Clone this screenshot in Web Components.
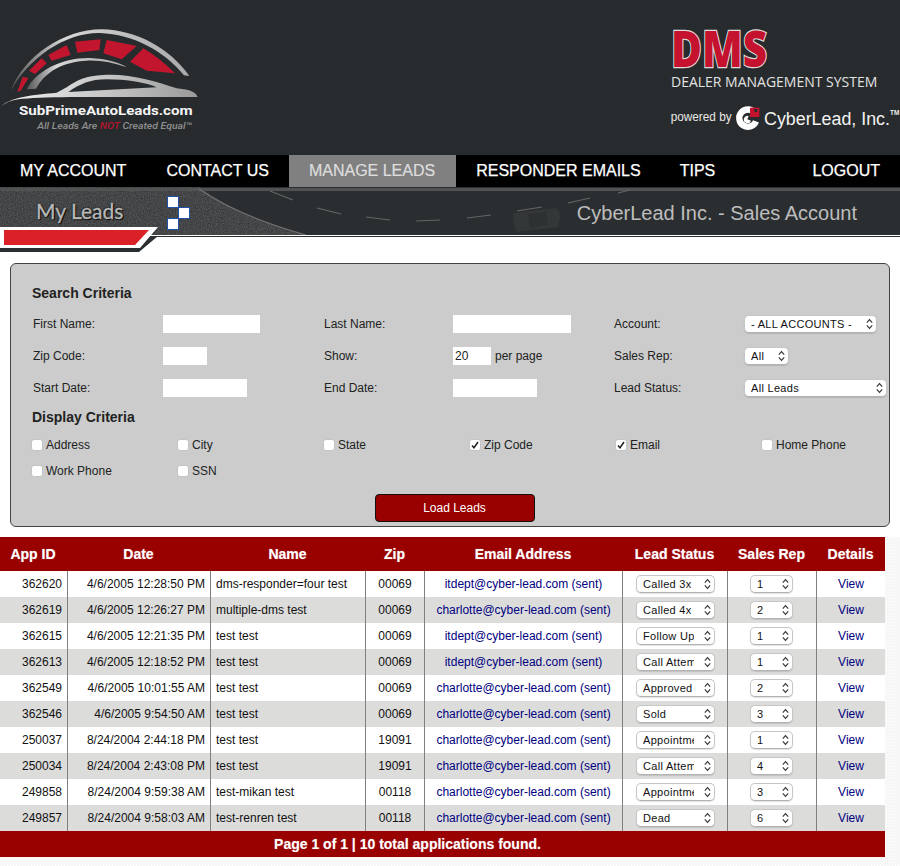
<!DOCTYPE html>
<html lang="en">
<head>
<meta charset="utf-8">
<title>DMS - My Leads</title>
<style>
html,body{margin:0;padding:0;background:#fff;font-family:"Liberation Sans",Arial,sans-serif;font-size:12px;color:#222;}
#page{width:900px;}
</style>
</head>
<body>
<div id="page">
  <site-header></site-header>
  <site-nav></site-nav>
  <site-banner></site-banner>
  <search-panel></search-panel>
  <lead-table></lead-table>
</div>
<script>
function make(name, html, init){
  customElements.define(name, class extends HTMLElement{
    connectedCallback(){
      if(this.shadowRoot) return;
      const r=this.attachShadow({mode:"open"});
      r.innerHTML = typeof html==="function" ? html(this) : html;
      if(init) init(r,this);
    }
  });
}

make("site-header",`
<style>
:host{display:flex;justify-content:space-between;height:155px;background:#282b2d;overflow:hidden}
svg{display:block;flex:none}
text{font-family:"Liberation Sans",Arial,sans-serif}
</style>
<svg width="300" height="155" viewBox="0 0 900 465" aria-label="SubPrimeAutoLeads.com">
  <defs>
    <linearGradient id="si" x1="0" x2="1" y1="0" y2="0"><stop offset="0" stop-color="#f4f4f4"/><stop offset=".55" stop-color="#c4c4c4"/><stop offset="1" stop-color="#9a9a9a"/></linearGradient>
    <linearGradient id="ar" x1="0" x2="1" y1="0" y2="0"><stop offset="0" stop-color="#555"/><stop offset=".3" stop-color="#d8d8d8"/><stop offset=".7" stop-color="#bbb"/><stop offset="1" stop-color="#aaa"/></linearGradient>
  </defs>
  <path fill="url(#ar)" d="M33,272 C70,170 190,88 305,88 C410,90 510,145 568,228 L552,226 C495,155 400,102 300,99 C195,97 85,175 33,272Z"/>
  <g fill="#c2162f">
    <path d="M52,275 L68,230 L85,235 L62,272Z"/>
    <path d="M87,212 L125,175 L140,190 L105,222Z"/>
    <path d="M145,165 L200,135 L212,165 L155,182Z"/>
    <path d="M225,125 L302,118 L298,150 L232,158Z"/>
    <path d="M320,120 L410,138 L365,178 L310,160Z"/>
    <path d="M430,145 Q480,175 525,220 L440,212 L390,185Z"/>
  </g>
  <path fill="url(#ar)" d="M80,268 C110,210 190,172 270,174 C320,176 360,188 380,202 C340,188 300,180 260,182 C190,185 135,215 108,266Z"/>
  <path fill="url(#si)" fill-rule="evenodd" d="M0,322 C30,290 100,285 170,278 L200,262 C230,240 260,226 320,224 C400,222 470,245 530,265 C560,268 585,272 593,291 L210,291 C140,292 85,294 55,298 C35,301 15,308 0,322Z M205,276 L470,262 C440,248 380,238 320,238 C270,238 240,252 205,276Z"/>
  <text x="57" y="346" font-size="40" font-weight="700" fill="#f4f4f4" textLength="521" lengthAdjust="spacingAndGlyphs" style="font-family:Roboto,'Liberation Sans',sans-serif">SubPrimeAutoLeads.com</text>
  <text x="112" y="387" font-size="27" font-style="italic" font-weight="500" fill="#909090" textLength="464" lengthAdjust="spacingAndGlyphs" style="font-family:Roboto,'Liberation Sans',sans-serif">All Leads Are <tspan fill="#b3142c">NOT</tspan> Created Equal™</text>
</svg>
<svg width="260" height="155" viewBox="0 0 780 465" aria-label="DMS Dealer Management System">
  <g transform="translate(0,30)">
    <text x="93" y="170" font-size="150" font-weight="800" fill="#c5122f" stroke="#dcdcdc" stroke-width="7" paint-order="stroke" textLength="288" lengthAdjust="spacingAndGlyphs" style="font-family:'Open Sans','Liberation Sans',sans-serif">DMS</text>
    <text x="93" y="230" font-size="42" fill="#e2e2e2" textLength="619" lengthAdjust="spacingAndGlyphs" style="font-family:'Open Sans','Liberation Sans',sans-serif">DEALER MANAGEMENT SYSTEM</text>
    <text x="92" y="333" font-size="36" fill="#e8e8e8" textLength="183" lengthAdjust="spacingAndGlyphs">powered by</text>
    <path d="M344,308 A26,26 0 1 0 348,334" fill="none" stroke="#fff" stroke-width="19"/>
    <path d="M326,318 A11,11 0 1 0 333,332 L322,328Z" fill="#fff"/>
    <rect x="330" y="293" width="28" height="28" fill="#c5122f"/>
    <rect x="343" y="297" width="9" height="9" fill="#282b2d"/>
    <text x="372" y="344" font-size="54" fill="#f2f2f2" textLength="378" lengthAdjust="spacingAndGlyphs">CyberLead, Inc.</text>
    <text x="750" y="315" font-size="22" font-weight="700" fill="#eee" textLength="28" lengthAdjust="spacingAndGlyphs">TM</text>
  </g>
</svg>
`);

make("site-nav",`
<style>
:host{display:flex;height:32px;background:#000;font:16px/32px "Liberation Sans",Arial,sans-serif;color:#fff}
a{display:block;padding:0 20px;color:inherit;text-decoration:none;-webkit-text-stroke:.25px #fff;white-space:nowrap}
a.on{background:#808080;color:#dedede;-webkit-text-stroke:.2px #dedede;padding-right:21px}
a.re{padding-right:19px}
a.end{margin-left:auto}
</style>
<a>MY ACCOUNT</a><a>CONTACT US</a><a class="on">MANAGE LEADS</a><a class="re">RESPONDER EMAILS</a><a>TIPS</a><a class="end">LOGOUT</a>
`);

make("site-banner",`
<style>
:host{display:block;position:relative;height:65px;background:#fff;overflow:hidden}
svg{position:absolute;left:0;top:0}
.row{position:relative;display:flex;justify-content:space-between;align-items:center;height:48px}
.l{margin-left:36px;font:21px/48px Lato,"Liberation Sans",sans-serif;color:#b8b8b8;-webkit-text-stroke:.4px #b8b8b8;text-shadow:0 0 2px #000,0 0 1px #000,1px 1px 1px #000;white-space:nowrap}
.r{margin:3px 43px 0 0;font:20px/44px "Liberation Sans",Arial,sans-serif;color:#bdbdbd;white-space:nowrap}
</style>
<svg width="900" height="65" viewBox="0 0 900 65" aria-hidden="true">
  <defs>
    <filter id="n" x="0" y="0" width="100%" height="100%"><feTurbulence type="fractalNoise" baseFrequency=".85" numOctaves="2" seed="4"/><feColorMatrix values="0 0 0 0 1  0 0 0 0 1  0 0 0 0 1  .3 0 0 0 -.08"/></filter>
    <clipPath id="cl"><path d="M0,0 L200,0 C225,20 260,35 306,48 L0,48Z"/></clipPath>
  </defs>
  <rect width="900" height="50" fill="#2b2e30"/>
  <g clip-path="url(#cl)"><rect width="320" height="48" fill="#363839"/><rect width="320" height="48" filter="url(#n)"/></g>
  <rect width="900" height="3" y="1" fill="#505253"/>
  <path d="M199,2 C225,20 260,35 306,48" fill="none" stroke="#6f7172" stroke-width="1.2"/>
  <path d="M270,4 L293,13 M317,21 L341,27 M366,30 L390,33 M416,34 L440,33 M467,31 L491,28 M517,24 L542,20 M568,16 L590,11 M618,6 L630,3" fill="none" stroke="#636566" stroke-width="1.2"/>
  <path d="M513,26 L556,21 Q560,24 560,31 L558,40 L517,45 Q513,38 513,26Z" fill="#343738"/>
  <path d="M528,27 L546,25 L548,38 L530,41Z" fill="#2e3132"/>
  <g fill="#fff" stroke="#1f52a8" stroke-width="1">
    <rect x="167.5" y="9.5" width="11" height="11"/><rect x="178.5" y="20.5" width="11" height="11"/><rect x="167.5" y="31.5" width="11" height="11"/>
  </g>
  <rect x="150" y="48" width="750" height="1" fill="#fff"/>
  <path d="M0,49 L158,49 L139,65 L0,65Z" fill="#2b2e30"/>
  <path d="M0,40 L158,40 L140,61 L0,61Z" fill="#fff"/>
  <path d="M4,43 L149,43 L135,58 L4,58Z" fill="#da2128"/>
</svg>
<div class="row"><span class="l">My Leads</span><span class="r">CyberLead Inc. - Sales Account</span></div>
`);

make("mac-select", h=>{
  const w=h.getAttribute("w")||"79";
  return `
<style>
:host{display:inline-flex;vertical-align:middle;text-align:left}
.b{box-sizing:border-box;width:${w}px;height:18px;display:flex;align-items:center;background:#fff;border:1px solid #c6c6c6;border-bottom-color:#b2b2b2;border-radius:5px;padding:0 3px 0 6.5px;box-shadow:0 1px 1px rgba(0,0,0,.12);font:11px/16px "Liberation Sans",Arial,sans-serif;letter-spacing:.3px;color:#111}
.t{flex:1;min-width:0;overflow:hidden;white-space:pre}
svg{flex:none;margin-left:10px;display:block}
</style>
<div class="b" role="combobox"><span class="t"><slot></slot></span>
<svg width="7" height="12" viewBox="0 0 7 12"><path d="M.8,4.6 L3.5,1.6 L6.2,4.6 M.8,7.4 L3.5,10.4 L6.2,7.4" fill="none" stroke="#333" stroke-width="1.1"/></svg></div>`;
});

make("check-field", h=>{
  const on=h.hasAttribute("checked");
  return `
<style>
:host{display:flex;align-items:center;height:26px;font:12px "Liberation Sans",Arial,sans-serif;color:#222}
.c{box-sizing:border-box;width:12px;height:12px;margin-right:3px;background:#fff;border:1px solid #c4c4c4;border-radius:3px;display:flex;align-items:center;justify-content:center;flex:none}
svg{display:block}
</style>
<span class="c" role="checkbox" aria-checked="${on}">${on?'<svg width="8" height="8" viewBox="0 0 8 8"><path d="M1,4.4 L3,6.8 L7,1" fill="none" stroke="#222" stroke-width="1.5"/></svg>':''}</span><slot></slot>`;
});

make("search-panel",`
<style>
:host{display:block;box-sizing:border-box;width:880px;height:264px;margin:11px 0 10px 10px;padding:21px 2px 0 22px;background:#cbcccb;border:1px solid #444;border-radius:6px;font:12px "Liberation Sans",Arial,sans-serif;color:#222}
h2{margin:0 0 0 -1px;font:bold 14px/16px "Liberation Sans",Arial,sans-serif;color:#222}
.g{display:grid;grid-template-columns:130px 161px 129px 161px 130px 143px;grid-auto-rows:32px;align-items:center;margin:7px 0 5px}
.g mac-select{margin-left:-.5px}
input{display:block;box-sizing:border-box;height:18px;border:0;padding:0 2px;margin:0;background:#fff;font:12px "Liberation Sans",Arial,sans-serif;color:#222;outline:0}
.inl{display:flex;align-items:center;gap:4px}
.c{display:grid;grid-template-columns:repeat(6,146px);margin:7px 0 10px -2px}
button{display:block;box-sizing:border-box;width:160px;height:28px;margin:0 0 0 342px;padding:0 1px 0 0;background:#990000;border:1px solid #111;border-radius:4px;color:#fff;font:12px "Liberation Sans",Arial,sans-serif}
</style>
<h2>Search Criteria</h2>
<div class="g">
  <span>First Name:</span><input style="width:97px">
  <span>Last Name:</span><input style="width:118px">
  <span>Account:</span><mac-select w="133">- ALL ACCOUNTS -</mac-select>
  <span>Zip Code:</span><input style="width:44px">
  <span>Show:</span><span class="inl"><input style="width:38px" value="20">per page</span>
  <span>Sales Rep:</span><mac-select w="45">All</mac-select>
  <span>Start Date:</span><input style="width:84px">
  <span>End Date:</span><input style="width:84px">
  <span>Lead Status:</span><mac-select w="143">All Leads</mac-select>
</div>
<h2>Display Criteria</h2>
<div class="c">
  <check-field>Address</check-field><check-field>City</check-field><check-field>State</check-field><check-field checked>Zip Code</check-field><check-field checked>Email</check-field><check-field>Home Phone</check-field>
  <check-field>Work Phone</check-field><check-field>SSN</check-field>
</div>
<button>Load Leads</button>
`);

const R=[
["362620","4/6/2005 12:28:50 PM","dms-responder=four test","00069","itdept@cyber-lead.com","Called 3x","1"],
["362619","4/6/2005 12:26:27 PM","multiple-dms test","00069","charlotte@cyber-lead.com","Called 4x","2"],
["362615","4/6/2005 12:21:35 PM","test test","00069","itdept@cyber-lead.com","Follow Up","1"],
["362613","4/6/2005 12:18:52 PM","test test","00069","itdept@cyber-lead.com","Call Attempted","1"],
["362549","4/6/2005 10:01:55 AM","test test","00069","charlotte@cyber-lead.com","Approved","2"],
["362546","4/6/2005 9:54:50 AM","test test","00069","charlotte@cyber-lead.com","Sold","3"],
["250037","8/24/2004 2:44:18 PM","test test","19091","charlotte@cyber-lead.com","Appointment","1"],
["250034","8/24/2004 2:43:08 PM","test test","19091","charlotte@cyber-lead.com","Call Attempted","4"],
["249858","8/24/2004 9:59:38 AM","test-mikan test","00118","charlotte@cyber-lead.com","Appointment","3"],
["249857","8/24/2004 9:58:03 AM","test-renren test","00118","charlotte@cyber-lead.com","Dead","6"]];

make("lead-table",`
<style>
:host{display:block;padding:0 15px 9px 0;background-color:#f7f7f7;background-image:radial-gradient(#fff 35%,transparent 40%);background-size:3px 3px;font:12px "Liberation Sans",Arial,sans-serif;color:#111}
table{width:885px;table-layout:fixed;border-collapse:separate;border-spacing:0;background:#fff}
th{height:34px;padding:0 2px 0 0;background:#990000;color:#fff;font:bold 14px "Liberation Sans",Arial,sans-serif;text-align:center;text-shadow:0 0 1px rgba(255,255,255,.5)}
th:last-child{padding-right:1px}
td{box-sizing:border-box;height:26px;padding:0 5px;border-right:1px solid #808080;white-space:nowrap;text-align:center;overflow:hidden}
td:last-child{border-right:0}
tr:nth-child(even) td{background:#dcdcdb}
td.rt{text-align:right}
td.lf{text-align:left}
td.rep{padding:0 6px 0 4px}
a{color:#000080;text-decoration:none}
tfoot td{height:26px;padding:0 70px 0 0;background:#990000!important;border:0;color:#fff;font:bold 14px "Liberation Sans",Arial,sans-serif;text-shadow:0 0 1px rgba(255,255,255,.4)}
</style>
<table>
<colgroup><col style="width:68px"><col style="width:143px"><col style="width:155px"><col style="width:59px"><col style="width:198px"><col style="width:105px"><col style="width:89px"><col style="width:68px"></colgroup>
<thead><tr><th>App ID</th><th>Date</th><th>Name</th><th>Zip</th><th>Email Address</th><th>Lead Status</th><th>Sales Rep</th><th>Details</th></tr></thead>
<tbody>${R.map(r=>`<tr><td class="rt">${r[0]}</td><td class="rt">${r[1]}</td><td class="lf">${r[2]}</td><td>${r[3]}</td><td><a>${r[4]} (sent)</a></td><td><mac-select w="79">${r[5]}</mac-select></td><td class="rep"><mac-select w="43">${r[6]}</mac-select></td><td><a>View</a></td></tr>`).join("")}</tbody>
<tfoot><tr><td colspan="8">Page 1 of 1 | 10 total applications found.</td></tr></tfoot>
</table>
`);
</script>
</body>
</html>
